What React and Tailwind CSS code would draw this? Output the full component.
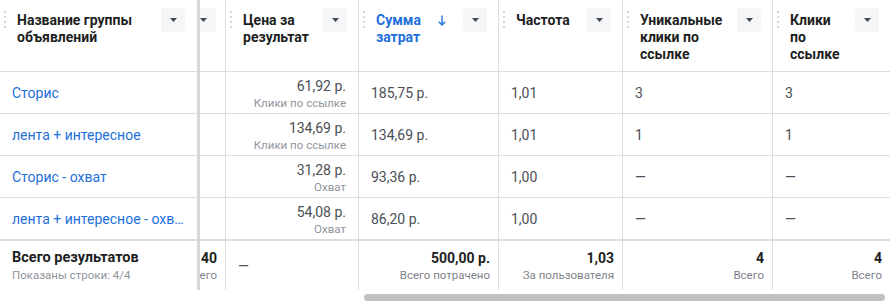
import React from 'react'

const COLS = [
  { key: 'res', w: 'w-[130px]', label: 'Результаты' },
  { key: 'cpr', w: 'w-[133px]', label: 'Цена за\nрезультат' },
  { key: 'spend', w: 'w-[140px]', label: 'Сумма\nзатрат', sorted: true },
  { key: 'freq', w: 'w-[124px]', label: 'Частота' },
  { key: 'uniq', w: 'w-[150px]', label: 'Уникальные\nклики по\nссылке' },
  { key: 'clicks', w: 'w-[118px]', label: 'Клики\nпо\nссылке' },
]

const ROWS = [
  { name: 'Сторис', cpr: ['61,92 р.', 'Клики по ссылке'], spend: '185,75 р.', freq: '1,01', uniq: '3', clicks: '3' },
  { name: 'лента + интересное', cpr: ['134,69 р.', 'Клики по ссылке'], spend: '134,69 р.', freq: '1,01', uniq: '1', clicks: '1' },
  { name: 'Сторис - охват', cpr: ['31,28 р.', 'Охват'], spend: '93,36 р.', freq: '1,00', uniq: '—', clicks: '—' },
  { name: 'лента + интересное - охват', cpr: ['54,08 р.', 'Охват'], spend: '86,20 р.', freq: '1,00', uniq: '—', clicks: '—' },
]

// footer totals, null = just a dash
const TOTALS = {
  res: ['40', 'Всего'],
  cpr: null,
  spend: ['500,00 р.', 'Всего потрачено'],
  freq: ['1,03', 'За пользователя'],
  uniq: ['4', 'Всего'],
  clicks: ['4', 'Всего'],
}

function Dots() {
  return (
    <div className="flex flex-col gap-[3px] mt-[3px] shrink-0">
      {[0, 1, 2, 3].map((i) => (
        <span key={i} className="w-[2px] h-[2px] rounded-full bg-[#c4c8ce]" />
      ))}
    </div>
  )
}

function CaretButton() {
  return (
    <div className="w-6 h-6 shrink-0 rounded-[3px] bg-[#f5f6f7] flex items-center justify-center">
      <svg width="7" height="4" viewBox="0 0 7 4">
        <polygon points="0,0 7,0 3.5,4" fill="#444950" />
      </svg>
    </div>
  )
}

function SortArrow() {
  return (
    <svg width="8" height="11" viewBox="0 0 8 11" className="mt-[7px] mr-[17px] shrink-0" fill="none" stroke="#1d6fdc" strokeWidth="1.4">
      <path d="M4 0.5 V10" />
      <path d="M0.8 6.8 L4 10 L7.2 6.8" />
    </svg>
  )
}

function HeaderCell({ col }) {
  return (
    <div className={`${col.w} shrink-0 h-full border-r border-[#dadde1] flex items-start pl-[4px] pr-[11px] pt-2`}>
      <Dots />
      <div
        className={`ml-[11px] mt-[4px] flex-1 whitespace-pre-line text-[14px] leading-[17px] font-bold ${
          col.sorted ? 'text-[#1d6fdc]' : 'text-[#1c1e21]'
        }`}
      >
        {col.label}
      </div>
      {col.sorted && <SortArrow />}
      <CaretButton />
    </div>
  )
}

function BodyCell({ col, row }) {
  const base = `${col.w} shrink-0 h-full border-r border-[#dadde1]`
  if (col.key === 'res') return <div className={base} />
  if (col.key === 'cpr') {
    return (
      <div className={`${base} pt-[5px] pr-3 text-right`}>
        <div className="text-[14px] leading-[18px] text-[#4b4f56]">{row.cpr[0]}</div>
        <div className="text-[11.5px] leading-[16px] text-[#90949c]">{row.cpr[1]}</div>
      </div>
    )
  }
  return (
    <div className={`${base} flex items-center px-3 text-[14px] leading-[18px] text-[#4b4f56]`}>
      {row[col.key]}
    </div>
  )
}

function FooterCell({ col }) {
  const t = TOTALS[col.key]
  const base = `${col.w} shrink-0 h-full border-r border-[#dadde1]`
  if (!t) {
    return <div className={`${base} flex items-center pl-3 text-[14px] text-[#4b4f56]`}>—</div>
  }
  return (
    <div className={`${base} pt-2 pr-2 text-right`}>
      <div className="text-[14px] leading-[18px] font-bold text-[#1c1e21]">{t[0]}</div>
      <div className="text-[11.5px] leading-[16px] text-[#7f8389]">{t[1]}</div>
    </div>
  )
}

export default function App() {
  return (
    <div className="w-[890px] h-[305px] bg-white overflow-hidden font-[family-name:Roboto,Helvetica,Arial,sans-serif]">
      <div className="flex h-[290px]">
        {/* Frozen name column */}
        <div className="w-[197px] shrink-0">
          <div className="h-[72px] border-b border-[#dadde1] flex items-start pl-[4px] pr-3 pt-2">
            <Dots />
            <div className="ml-[11px] mt-[4px] flex-1 text-[14px] leading-[17px] font-bold text-[#1c1e21]">
              Название группы объявлений
            </div>
            <CaretButton />
          </div>
          {ROWS.map((r) => (
            <div key={r.name} className="h-[42px] border-b border-[#dadde1] flex items-center pl-3 pr-3">
              <span className="truncate text-[14px] leading-[18px] text-[#1d6fdc]">{r.name}</span>
            </div>
          ))}
          <div className="h-[51px] border-t border-[#dadde1] pt-2 pl-3">
            <div className="text-[14.5px] leading-[18px] font-bold text-[#1c1e21]">Всего результатов</div>
            <div className="text-[11.5px] leading-[16px] text-[#90949c]">Показаны строки: 4/4</div>
          </div>
        </div>

        {/* Freeze divider */}
        <div className="w-[3px] shrink-0 bg-[#d6d8dc]" />

        {/* Scrolled columns */}
        <div className="flex-1 overflow-hidden">
          <div className="-ml-[104px] w-max">
            <div className="flex h-[72px] border-b border-[#dadde1]">
              {COLS.map((c) => (
                <HeaderCell key={c.key} col={c} />
              ))}
            </div>
            {ROWS.map((r) => (
              <div key={r.name} className="flex h-[42px] border-b border-[#dadde1]">
                {COLS.map((c) => (
                  <BodyCell key={c.key} col={c} row={r} />
                ))}
              </div>
            ))}
            <div className="flex h-[51px] border-t border-[#dadde1]">
              {COLS.map((c) => (
                <FooterCell key={c.key} col={c} />
              ))}
            </div>
          </div>
        </div>
      </div>

      {/* Horizontal scrollbar */}
      <div className="flex h-[15px]">
        <div className="w-[364px] shrink-0" />
        <div className="mt-[4px] w-[521px] h-[7px] rounded-full bg-[#c1c1c1]" />
      </div>
    </div>
  )
}
